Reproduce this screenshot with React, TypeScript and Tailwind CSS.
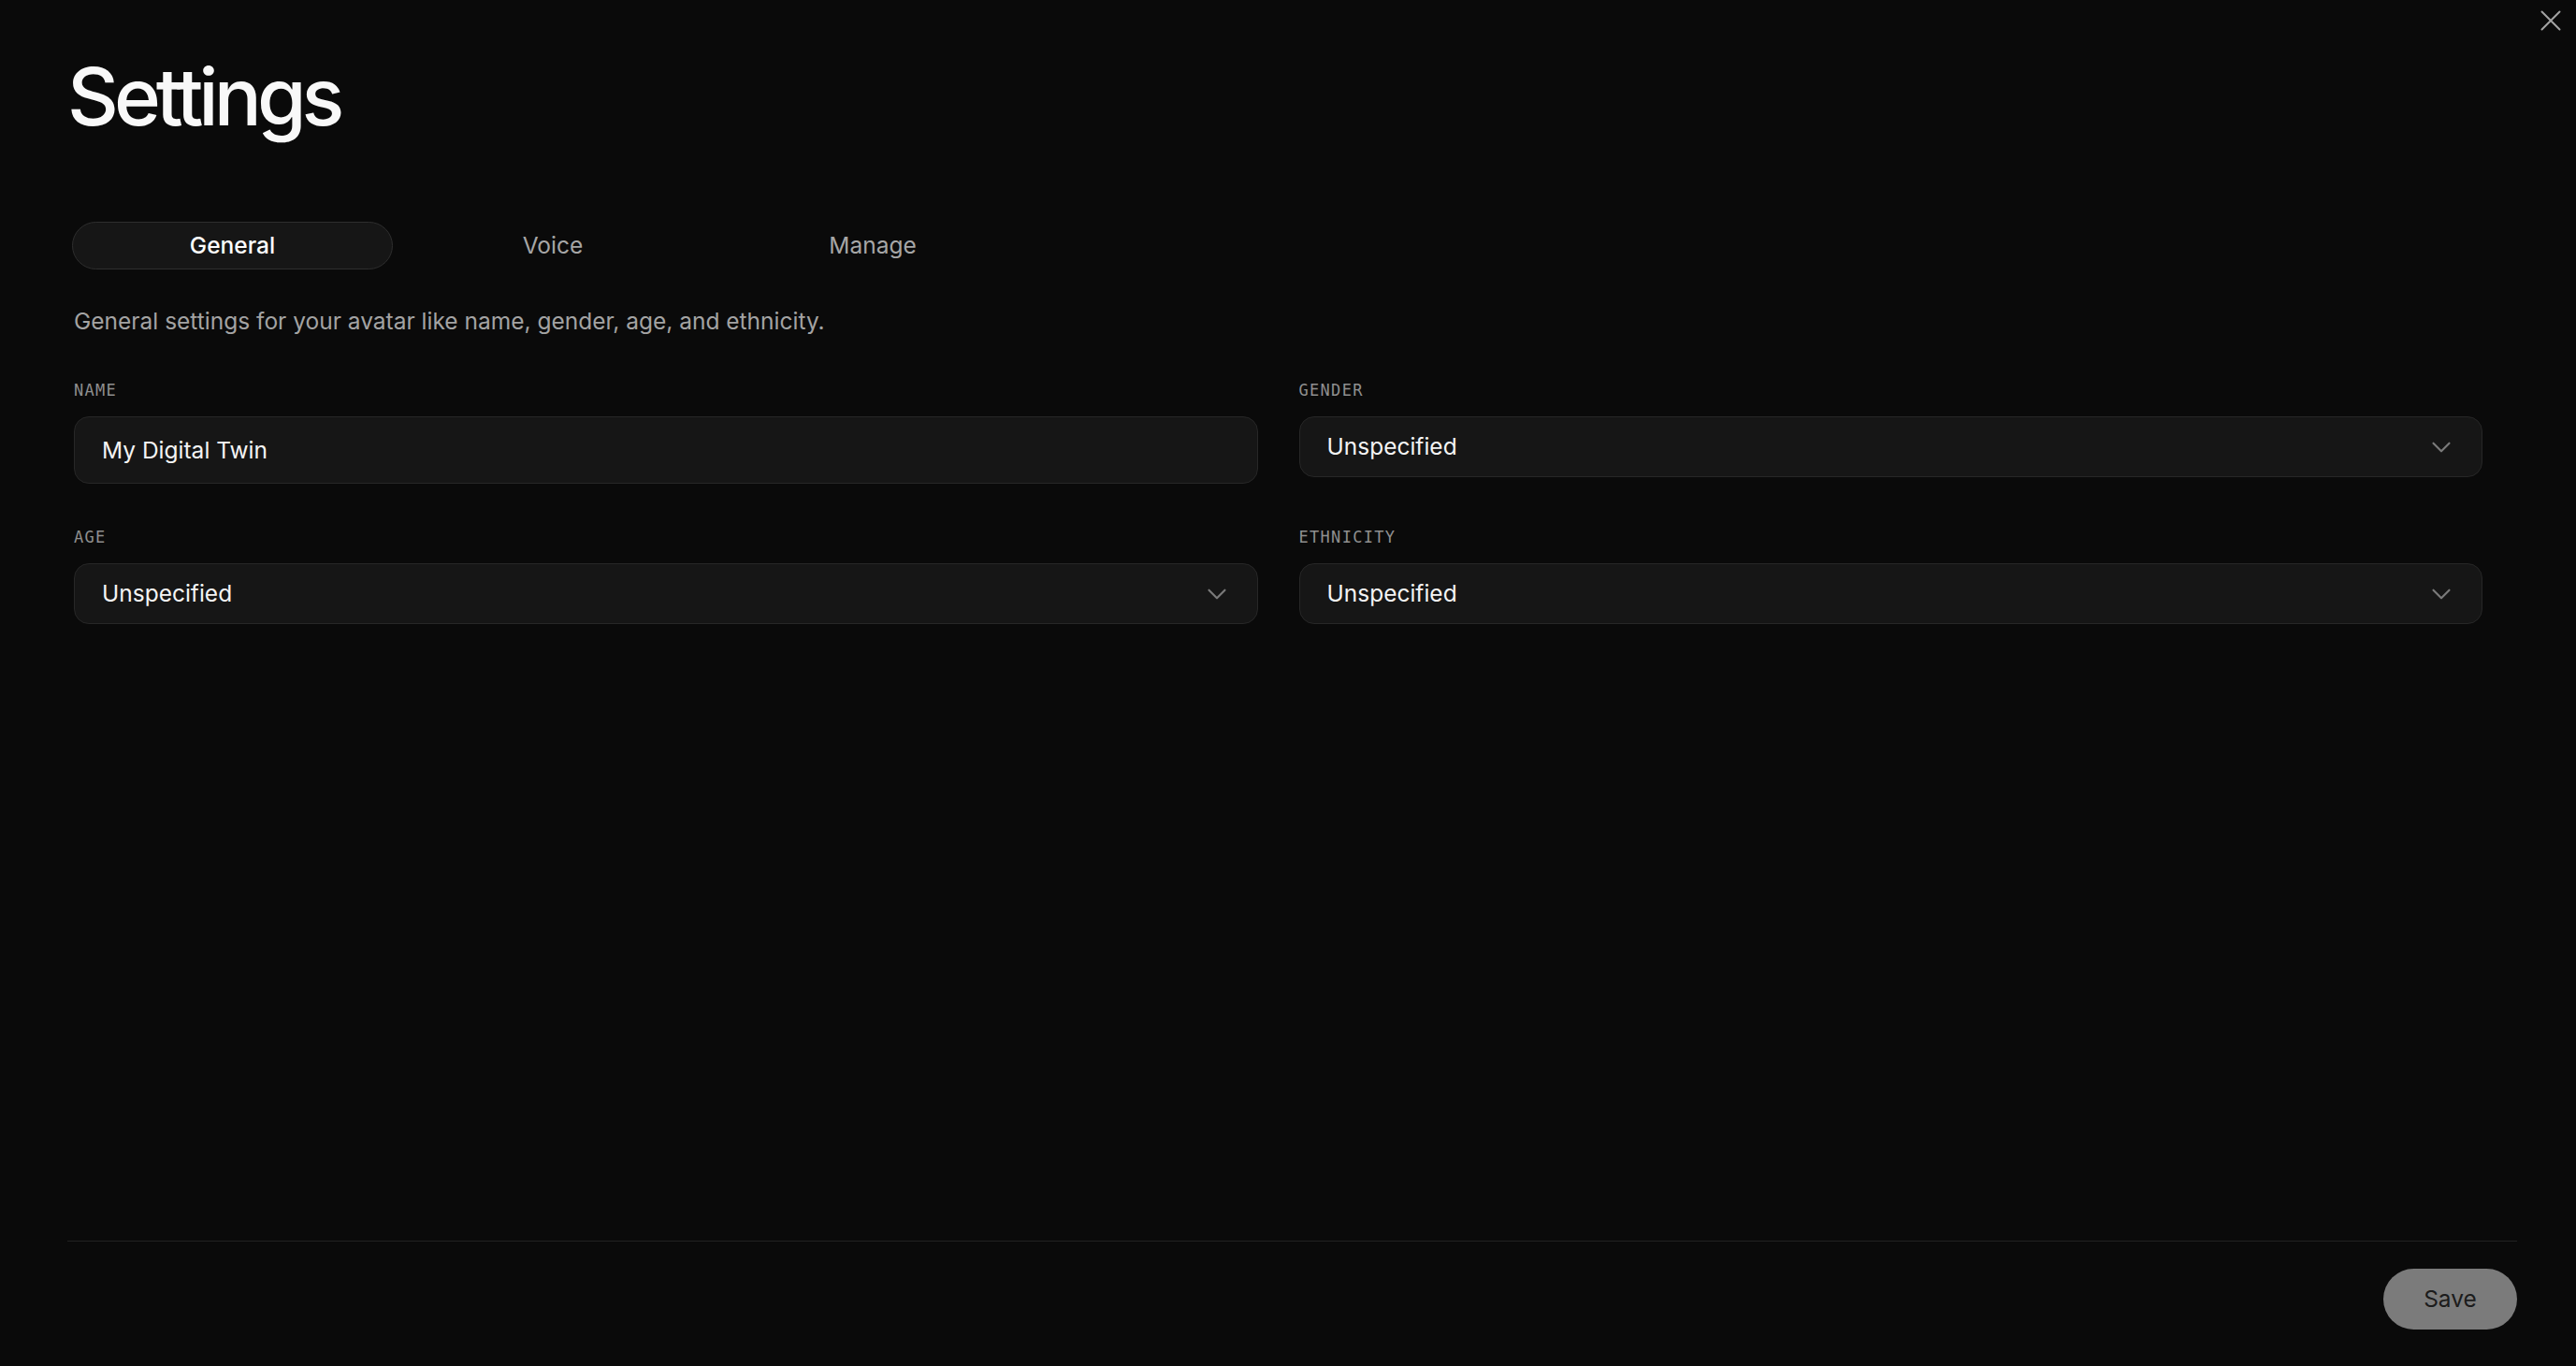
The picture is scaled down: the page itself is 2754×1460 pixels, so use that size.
import React, { useState } from 'react';

const tabs = ['General', 'Voice', 'Manage'];

const Chevron: React.FC = () => (
  <svg width="34" height="34" viewBox="0 0 24 24" fill="none" stroke="#7a7a7a" strokeWidth="1.5" strokeLinecap="round" strokeLinejoin="round">
    <path d="m6 9 6 6 6-6" />
  </svg>
);

const FieldLabel: React.FC<{ children: React.ReactNode }> = ({ children }) => (
  <label className="block h-[20px] leading-[20px] text-[17px] tracking-[1.3px] text-[#8f8f8f] font-['DejaVu_Sans_Mono',monospace] mb-[18px]">
    {children}
  </label>
);

const SelectBox: React.FC<{ value: string }> = ({ value }) => (
  <div className="h-[65px] flex items-center justify-between pl-[29px] pr-[26px] bg-[#161616] border border-[#272727] rounded-[16px]">
    <span className="text-[24.5px] text-[#f4f4f4]">{value}</span>
    <Chevron />
  </div>
);

const App: React.FC = () => {
  const [active, setActive] = useState('General');

  return (
    <div className="relative h-[1460px] w-full bg-[#0a0a0a] flex flex-col font-['Inter',sans-serif] text-white overflow-hidden">
      {/* close */}
      <button className="absolute top-[11px] right-[16px] w-[22px] h-[22px]">
        <svg width="22" height="22" viewBox="0 0 22 22" fill="none" stroke="#a3a3a3" strokeWidth="2" strokeLinecap="round">
          <path d="M1.5 1.5 20.5 20.5M20.5 1.5 1.5 20.5" />
        </svg>
      </button>

      <div className="flex-1 pl-[72px] pr-[63px] pt-[61px]">
        <h1 className="text-[85px] leading-[86px] font-medium tracking-[-5px] text-[#f8f8f8]">Settings</h1>

        {/* tabs */}
        <div className="mt-[90px] ml-[5px] flex">
          {tabs.map((t) => (
            <button
              key={t}
              onClick={() => setActive(t)}
              className={
                active === t
                  ? 'w-[343px] h-[51px] rounded-full bg-[#161616] border border-[#2e2e2e] text-[24.5px] font-medium text-white'
                  : 'w-[342px] h-[51px] rounded-full border border-transparent text-[24.5px] text-[#a6a6a6]'
              }
            >
              {t}
            </button>
          ))}
        </div>

        <div className="pl-[7px] pr-[37px]">
          <p className="mt-[37px] text-[24.5px] leading-[36px] text-[#a3a3a3]">
            General settings for your avatar like name, gender, age, and ethnicity.
          </p>

          <div className="mt-[46px] grid grid-cols-2 gap-x-[44px] gap-y-[47px]">
            <div>
              <FieldLabel>NAME</FieldLabel>
              <div className="h-[72px] flex items-center pl-[29px] bg-[#161616] border border-[#272727] rounded-[16px]">
                <span className="text-[24.5px] text-[#f4f4f4]">My Digital Twin</span>
              </div>
            </div>
            <div>
              <FieldLabel>GENDER</FieldLabel>
              <SelectBox value="Unspecified" />
            </div>
            <div>
              <FieldLabel>AGE</FieldLabel>
              <SelectBox value="Unspecified" />
            </div>
            <div>
              <FieldLabel>ETHNICITY</FieldLabel>
              <SelectBox value="Unspecified" />
            </div>
          </div>
        </div>
      </div>

      {/* footer */}
      <div className="ml-[72px] mr-[63px] border-t border-[#222222] pt-[29px] pb-[39px] flex justify-end">
        <button className="w-[143px] h-[65px] rounded-full bg-[#7b7b7b] text-[24.5px] text-[#1c1c1c]">Save</button>
      </div>
    </div>
  );
};

export default App;
